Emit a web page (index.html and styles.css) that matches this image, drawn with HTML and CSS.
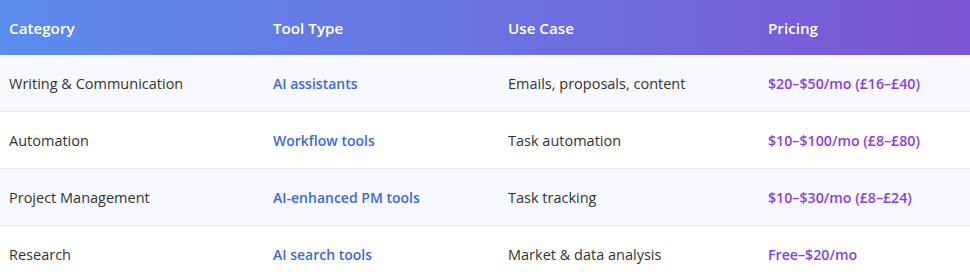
FILE: index.html
```html
<!DOCTYPE html>
<html lang="en">
<head>
<meta charset="utf-8">
<title>AI Tools</title>
<link rel="stylesheet" href="styles.css">
</head>
<body>
<table class="tools">
  <colgroup>
    <col class="c1"><col class="c2"><col class="c3"><col class="c4">
  </colgroup>
  <thead>
    <tr>
      <th>Category</th>
      <th>Tool Type</th>
      <th>Use Case</th>
      <th>Pricing</th>
    </tr>
  </thead>
  <tbody>
    <tr>
      <td>Writing &amp; Communication</td>
      <td class="type">AI assistants</td>
      <td>Emails, proposals, content</td>
      <td class="price">$20–$50/mo (£16–£40)</td>
    </tr>
    <tr>
      <td>Automation</td>
      <td class="type">Workflow tools</td>
      <td>Task automation</td>
      <td class="price">$10–$100/mo (£8–£80)</td>
    </tr>
    <tr>
      <td>Project Management</td>
      <td class="type">AI-enhanced PM tools</td>
      <td>Task tracking</td>
      <td class="price">$10–$30/mo (£8–£24)</td>
    </tr>
    <tr>
      <td>Research</td>
      <td class="type">AI search tools</td>
      <td>Market &amp; data analysis</td>
      <td class="price">Free–$20/mo</td>
    </tr>
  </tbody>
</table>
</body>
</html>
```
FILE: styles.css
```css
html, body {
  margin: 0;
  padding: 0;
  background: #ffffff;
}
body {
  font-family: "Open Sans", "Noto Sans", sans-serif;
  font-size: 14.5px;
  color: #333333;
}
.tools {
  width: 970px;
  border-collapse: collapse;
  table-layout: fixed;
}
.c1 { width: 264px; }
.c2 { width: 235px; }
.c3 { width: 260px; }
.c4 { width: 211px; }
.tools thead tr {
  background: linear-gradient(90deg, #5b8cee 0%, #6a72e2 50%, #7b55d5 100%);
}
.tools th {
  height: 55px;
  padding: 0 9px;
  text-align: left;
  color: #ffffff;
  font-weight: 600;
  font-size: 15.2px;
}
.tools td {
  height: 56px;
  padding: 0 9px;
  border-bottom: 1px solid #e4e7f4;
  white-space: nowrap;
}
.tools tbody tr:nth-child(odd) {
  background: #f8f9fe;
}
.tools td.type {
  color: #3b68e6;
  font-weight: 600;
  font-size: 14px;
}
.tools td.price {
  color: #8a3fe6;
  font-weight: 600;
  font-size: 14.2px;
}
```
